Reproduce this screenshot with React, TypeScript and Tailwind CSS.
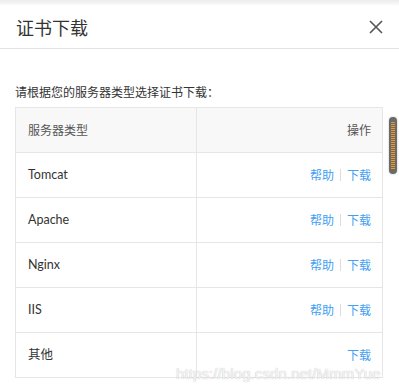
import React from "react";

const rows = [
  { name: "Tomcat", help: true },
  { name: "Apache", help: true },
  { name: "Nginx", help: true },
  { name: "IIS", help: true },
  { name: "其他", help: false },
];

const font = { fontFamily: 'Lato, "Noto Sans CJK SC", sans-serif' };

export default function App() {
  return (
    <div
      className="relative w-[399px] h-[389px] overflow-hidden bg-white"
      style={font}
    >
      <div className="h-[5px] bg-gradient-to-b from-[#ececec] to-[#fafafa]" />
      <div className="h-[44px] flex items-center justify-between pl-4 pr-[15px] border-b border-[#e3e3e3]">
        <span className="text-[18px] leading-none text-[#333] font-['Noto_Sans_CJK_SC',sans-serif]">证书下载</span>
        <svg width="16" height="16" viewBox="0 0 16 16" className="mt-[1px]">
          <path d="M2 2 L14 14 M14 2 L2 14" stroke="#555" strokeWidth="1.6" />
        </svg>
      </div>
      <div className="pl-[15px] pr-[16px]">
        <div className="mt-[33px] h-[20px] leading-[20px] text-[12px] text-[#333] font-['Noto_Sans_CJK_SC',sans-serif]">
          请根据您的服务器类型选择证书下载：
        </div>
        <div className="mt-[5px] border border-[#e6e6e6] text-[12px]">
          <div className="flex h-[44px] bg-[#f8f8f8] text-[#555]">
            <div className="w-[181px] border-r border-[#e6e6e6] flex items-center pl-3 font-['Noto_Sans_CJK_SC',sans-serif]">
              服务器类型
            </div>
            <div className="flex-1 flex items-center justify-end pr-[11px] font-['Noto_Sans_CJK_SC',sans-serif]">
              操作
            </div>
          </div>
          {rows.map((r) => (
            <div key={r.name} className="flex h-[45px] border-t border-[#e6e6e6] text-[#333]">
              <div className="w-[181px] border-r border-[#e6e6e6] flex items-center pl-3 text-[12.5px]">
                {r.name}
              </div>
              <div className="flex-1 flex items-center justify-end pr-[11px] text-[#42a0f2] font-['Noto_Sans_CJK_SC',sans-serif]">
                {r.help && (
                  <>
                    <span>帮助</span>
                    <span className="mx-[6px] w-px h-[12px] bg-[#dcdcdc]" />
                  </>
                )}
                <span>下载</span>
              </div>
            </div>
          ))}
        </div>
      </div>
      <div className="absolute left-[389px] top-[117px] w-[8px] h-[57px] rounded-[4px] bg-[#6a6a6a] p-[2px] pt-[5px] pb-[4px] shadow-[0_0_2px_rgba(0,0,0,0.3)]">
        <div className="w-full h-full rounded-[1px] bg-[repeating-linear-gradient(to_bottom,#f39a1c_0px,#f39a1c_1px,#6a6a6a_1px,#6a6a6a_2px)]" />
      </div>
      <div className="absolute left-[176px] top-[364px] text-[15px] leading-[20px] font-['Liberation_Sans',sans-serif] text-[rgba(255,255,255,0.85)] [text-shadow:0_0_1px_rgba(120,120,120,0.6)] tracking-[0.1px]">
        https://blog.csdn.net/MmmYue
      </div>
    </div>
  );
}
